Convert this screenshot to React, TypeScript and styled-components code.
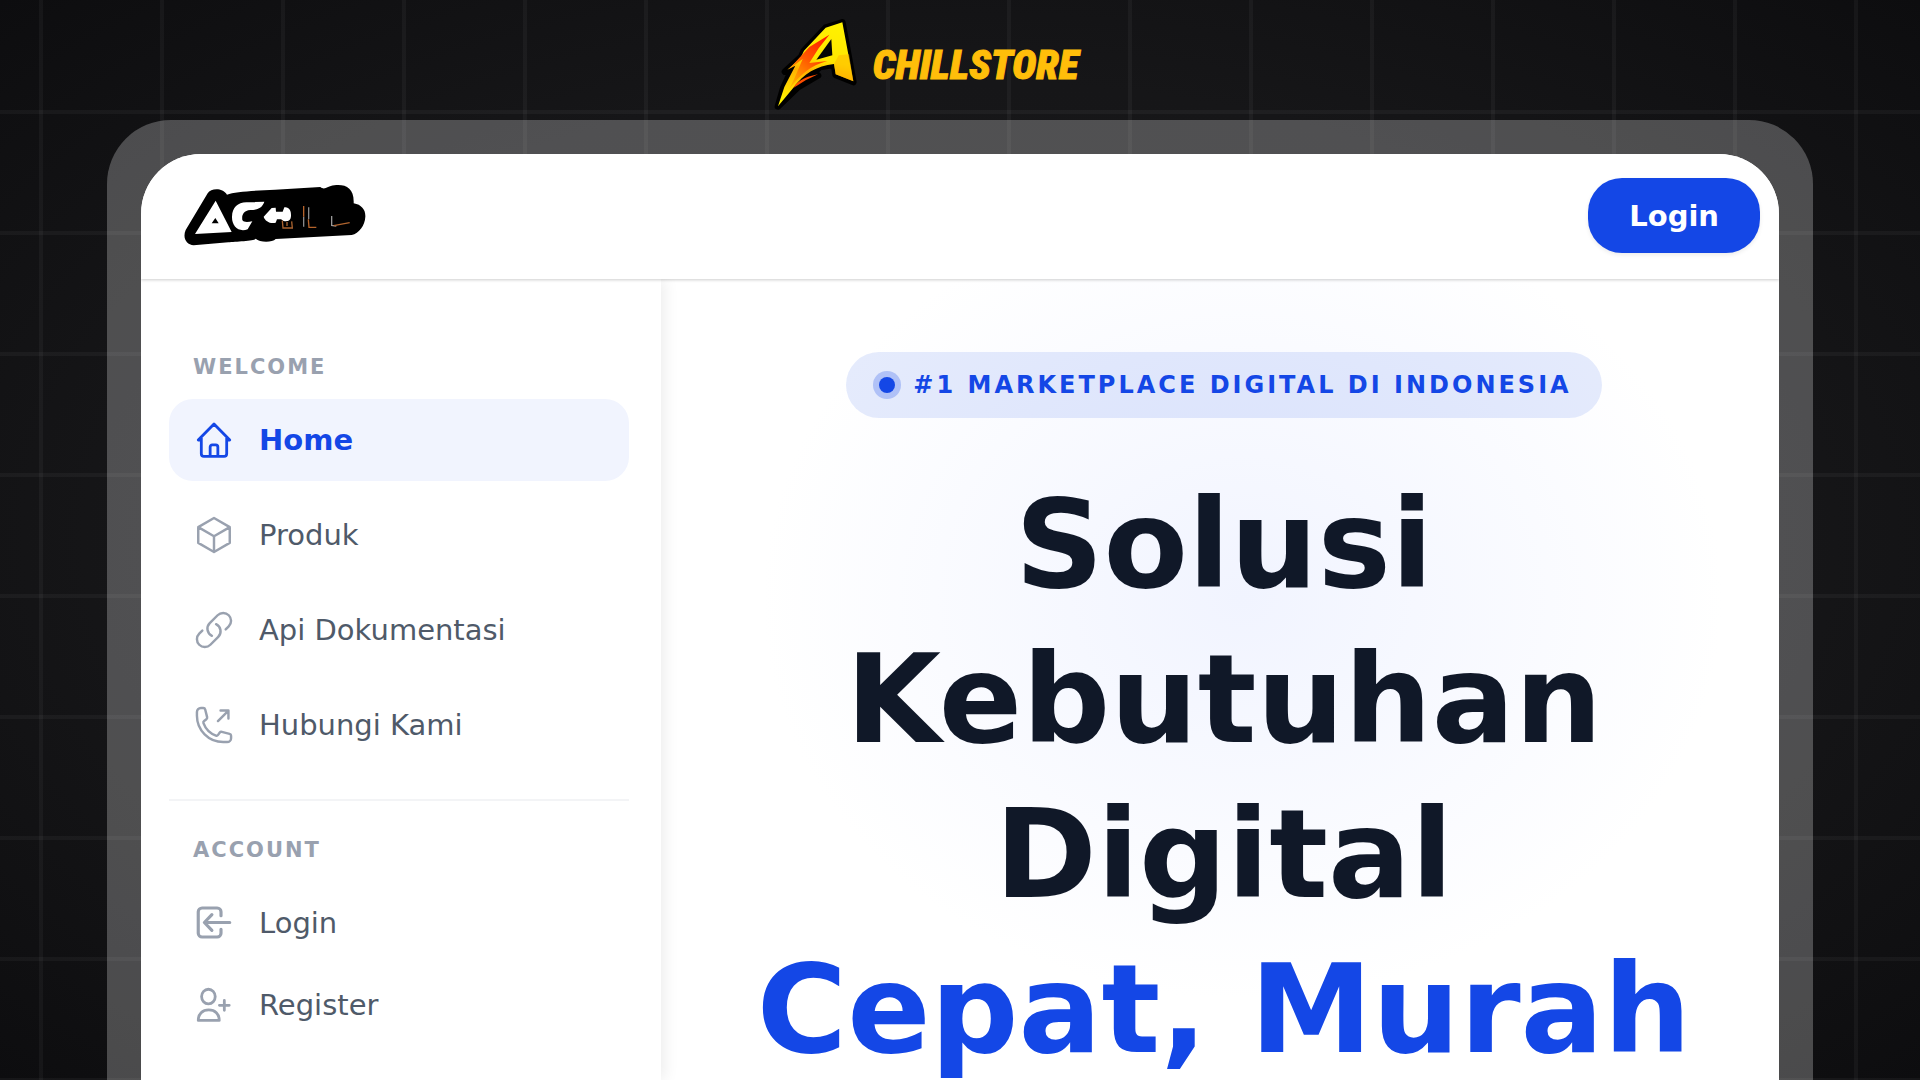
import React from 'react';
import styled, { createGlobalStyle } from 'styled-components';

const color = {
  primary: '#1447e6',
  ink: '#101828',
  text: '#4f5a69',
  muted: '#99a1af',
  line: '#f3f4f6',
  gold: '#ffbe0a',
};

const GlobalStyle = createGlobalStyle`
  *, *::before, *::after { box-sizing: border-box; }
  body {
    margin: 0;
    background: #111113;
    font-family: "DejaVu Sans", sans-serif;
  }
  h1, h2, p, ul { margin: 0; padding: 0; }
  ul { list-style: none; }
`;

const Page = styled.div`
  display: flex;
  flex-direction: column;
  height: 100vh;
  overflow: hidden;
  background:
    linear-gradient(to right, rgba(255, 255, 255, 0.04) 4px, transparent 4px) 39px 0 / 121px 121px,
    linear-gradient(to bottom, rgba(255, 255, 255, 0.04) 4px, transparent 4px) 0 110px / 121px 121px,
    radial-gradient(ellipse at center, #1a1a1c 0%, #161618 60%, #0d0d0f 100%);
`;

const TopBrand = styled.header`
  display: flex;
  justify-content: center;
  align-items: center;
  gap: 13px;
  flex: none;
  height: 120px;
  padding: 10px 72px 0 0;
`;

const BrandName = styled.span`
  color: ${color.gold};
  font: italic 900 41px/44px "Roboto Condensed", Roboto, "Liberation Sans", sans-serif;
  -webkit-text-stroke: 1px ${color.gold};
`;

const Frame = styled.div`
  display: flex;
  flex: 1;
  min-height: 0;
  margin: 0 107px;
  padding: 34px 34px 0;
  border-radius: 64px 64px 0 0;
  background: rgba(255, 255, 255, 0.25);
`;

const Site = styled.div`
  display: flex;
  flex-direction: column;
  flex: 1;
  min-width: 0;
  overflow: hidden;
  border-radius: 60px 60px 0 0;
  background: #fff;
`;

const SiteHeader = styled.header`
  display: flex;
  justify-content: space-between;
  align-items: center;
  flex: none;
  height: 125px;
  padding: 0 19px 2px 34px;
  background: #fff;
  box-shadow: 0 1px 3px rgba(0, 0, 0, 0.2);
  z-index: 2;
`;

const LoginButton = styled.button`
  height: 75px;
  padding: 0 41px;
  border: 0;
  border-radius: 34px;
  background: ${color.primary};
  color: #fff;
  font: 700 29px/40px "DejaVu Sans", sans-serif;
  box-shadow: 0 2px 4px rgba(0, 0, 0, 0.08);
`;

const Body = styled.div`
  display: flex;
  flex: 1;
  min-height: 0;
`;

const Sidebar = styled.nav`
  flex: none;
  width: 520px;
  padding: 73px 32px 0 28px;
  background: #fff;
  box-shadow: 4px 0 14px rgba(0, 0, 0, 0.07);
  z-index: 1;
`;

const GroupLabel = styled.h2`
  margin: 0 0 17px;
  padding-left: 24px;
  color: ${color.muted};
  font-size: 21px;
  line-height: 30px;
  letter-spacing: 2px;
`;

const Menu = styled.ul<{ $gap: number }>`
  display: grid;
  gap: ${(p) => p.$gap}px;
`;

const MenuLink = styled.a<{ $active?: boolean }>`
  display: flex;
  align-items: center;
  gap: 24px;
  height: 82px;
  padding: 0 24px;
  border-radius: 24px;
  background: ${(p) => (p.$active ? '#f1f4fe' : 'transparent')};
  color: ${(p) => (p.$active ? color.primary : color.text)};
  font-size: 29px;
  font-weight: ${(p) => (p.$active ? 700 : 400)};
  line-height: 40px;
  text-decoration: none;

  svg { color: ${(p) => (p.$active ? color.primary : color.muted)}; }
`;

const Divider = styled.hr`
  height: 2px;
  margin: 33px 0 34px;
  border: 0;
  background: ${color.line};
`;

const Hero = styled.main`
  display: flex;
  flex-direction: column;
  align-items: center;
  flex: 1;
  min-width: 0;
  padding: 73px 0 0 8px;
  background: radial-gradient(480px 400px at 52% 320px, #f1f4ff, #fff);
`;

const Badge = styled.p`
  display: flex;
  align-items: center;
  gap: 18px;
  flex: none;
  height: 66px;
  padding: 0 30px 0 33px;
  border-radius: 33px;
  background: rgba(20, 71, 230, 0.11);
  color: ${color.primary};
  font-size: 24px;
  font-weight: 700;
  line-height: 32px;
  letter-spacing: 3px;
`;

const Dot = styled.span`
  width: 16px;
  height: 16px;
  border-radius: 50%;
  background: ${color.primary};
  box-shadow: 0 0 0 6px rgba(20, 71, 230, 0.25);
`;

const Title = styled.h1`
  flex: none;
  margin-top: 49px;
  color: ${color.ink};
  font-size: 123px;
  line-height: 155px;
  text-align: center;
`;

const Accent = styled.span`
  display: block;
  color: ${color.primary};
  white-space: nowrap;
`;

const StrokeIcon = ({ d, width = 1.6 }: { d: string; width?: number }) => (
  <svg width="42" height="42" viewBox="0 0 24 24" fill="none" stroke="currentColor"
    strokeWidth={width} strokeLinecap="round" strokeLinejoin="round" aria-hidden="true">
    <path d={d} />
  </svg>
);

const icons = {
  home: 'M4.75 12H3l9-9.2 9 9.2h-1.75M4.75 10.8v9a1.5 1.5 0 0 0 1.5 1.5h11.5a1.5 1.5 0 0 0 1.5-1.5v-9M9.8 21.2V16a1.2 1.2 0 0 1 1.2-1.2h2a1.2 1.2 0 0 1 1.2 1.2v5.2',
  cube: 'm21 7.5-9-5.25L3 7.5m18 0-9 5.25m9-5.25v9l-9 5.25M3 7.5l9 5.25M3 7.5v9l9 5.25m0-9v9',
  link: 'M13.19 8.688a4.5 4.5 0 0 1 1.242 7.244l-4.5 4.5a4.5 4.5 0 0 1-6.364-6.364l1.757-1.757m13.35-.622 1.757-1.757a4.5 4.5 0 0 0-6.364-6.364l-4.5 4.5a4.5 4.5 0 0 0 1.242 7.244',
  phone: 'M20.25 3.75v4.5m0-4.5h-4.5m4.5 0-6 6m3 12c-8.284 0-15-6.716-15-15V4.5A2.25 2.25 0 0 1 4.5 2.25h1.372c.516 0 .966.351 1.091.852l1.106 4.423c.11.44-.054.902-.417 1.173l-1.293.97a1.062 1.062 0 0 0-.38 1.21 12.035 12.035 0 0 0 7.143 7.143c.441.162.928-.004 1.21-.38l.97-1.293a1.125 1.125 0 0 1 1.173-.417l4.423 1.106c.5.125.852.575.852 1.091V19.5a2.25 2.25 0 0 1-2.25 2.25h-2.25Z',
  login: 'M16 7.8V5.6a2.2 2.2 0 0 0-2.2-2.2H5.2A2.2 2.2 0 0 0 3 5.6v12.2A2.2 2.2 0 0 0 5.2 20h8.6a2.2 2.2 0 0 0 2.2-2.2v-2.2M21 11.7H6.7M10.8 7.2l-4.3 4.5 4.3 4.5',
  register: 'M12.7 7.2a3.9 4.2 0 1 1-7.8 0 3.9 4.2 0 0 1 7.8 0ZM3 20.8c0-3.6 2.4-6 6-6s6 2.4 6 6ZM17.9 9.4v5.6M15.1 12.2h5.6',
};

const LightningA = () => (
  <svg width="90" height="96" viewBox="0 0 270 288" role="img" aria-label="A">
    <defs>
      <linearGradient id="boltFill" x1="0.7" y1="0" x2="0.5" y2="1">
        <stop offset="0" stopColor="#fff200" />
        <stop offset="0.45" stopColor="#ffe500" />
        <stop offset="0.62" stopColor="#ffb000" />
        <stop offset="1" stopColor="#fff000" />
      </linearGradient>
      <linearGradient id="boltFlame" x1="0.8" y1="0" x2="0.2" y2="1">
        <stop offset="0" stopColor="#ff1e00" />
        <stop offset="0.5" stopColor="#ff5a00" />
        <stop offset="1" stopColor="#ffb400" />
      </linearGradient>
    </defs>
    <g transform="translate(0 -22)">
      <path d="M217 38 167 54 102 123 94 141 45 186 70 171 40 235 24 290 84 232 144 197 104 212 150 172 192 165 197 196 250 217Z"
        fill="#000" stroke="#000" strokeWidth="20" strokeLinejoin="round" />
      <path d="M217 38 167 54 102 123 92 144 52 180 76 168 43 232 24 290 72 232C100 194 140 168 192 163L197 194 250 215Z" fill="url(#boltFill)" />
      <path d="M184 88 187 137 139 150Z" fill="#050505" />
      <path d="M206 137 237 134 250 215 197 194 192 163Z" fill="#ffb800" opacity=".55" />
      <path d="M178 75 118 112 58 177 98 148 74 204 58 238C92 194 120 168 172 154L118 160 146 116Z" fill="url(#boltFlame)" />
      <path d="M78 223C98 206 118 199 144 194L108 211 70 235Z" fill="#ff4d00" />
    </g>
  </svg>
);

const AchillLogo = () => (
  <svg width="200" height="80" viewBox="0 0 600 240" role="img" aria-label="Achill">
    <path d="M98 52C108 36 142 34 156 56 180 46 240 44 300 41L436 33C450 44 456 30 478 28 512 24 538 36 536 82 560 86 572 102 571 122 570 148 552 172 530 177L302 189C292 200 254 200 242 188 236 196 180 196 160 199L56 208C34 206 22 186 32 162Z"
      fill="#000" />
    <path d="M122 74 60 174 170 168ZM121 126 131 142H110Z" fill="#fff" fillRule="evenodd" />
    <path d="M268 77C262 96 246 102 226 102 204 104 200 118 202 132 206 140 220 138 232 136L218 160C190 170 170 150 171 122 172 94 188 80 214 79Z" fill="#fff" />
    <path d="M266 122 290 96 302 95 303 107H323L328 94C342 92 349 104 348 120 347 134 340 137 326 135L318 130H306L302 140C286 144 270 136 266 122Z" fill="#fff" />
    <g fill="none" strokeWidth="4">
      <path d="M322 134 324 156H352L350 136M336 138V150" stroke="#a9622f" />
      <path d="M386 122V152M401 94V130" stroke="#8a8a8a" />
      <path d="M386 90V122M400 130 402 154H424" stroke="#b5632b" />
      <path d="M470 120V148L484 150" stroke="#999" />
      <path d="M476 149 524 140" stroke="#b0642e" />
    </g>
  </svg>
);

type Item = { label: string; icon: keyof typeof icons; active?: boolean; width?: number };

const welcome: Item[] = [
  { label: 'Home', icon: 'home', active: true },
  { label: 'Produk', icon: 'cube', width: 1.4 },
  { label: 'Api Dokumentasi', icon: 'link', width: 1.4 },
  { label: 'Hubungi Kami', icon: 'phone', width: 1.4 },
];

const account: Item[] = [
  { label: 'Login', icon: 'login', width: 1.8 },
  { label: 'Register', icon: 'register', width: 1.6 },
];

const MenuList = ({ items, gap }: { items: Item[]; gap: number }) => (
  <Menu $gap={gap}>
    {items.map((item) => (
      <li key={item.label}>
        <MenuLink href="#" $active={item.active}>
          <StrokeIcon d={icons[item.icon]} width={item.width} />
          {item.label}
        </MenuLink>
      </li>
    ))}
  </Menu>
);

export default function App() {
  return (
    <Page>
      <GlobalStyle />
      <TopBrand>
        <LightningA />
        <BrandName>CHILLSTORE</BrandName>
      </TopBrand>
      <Frame>
        <Site>
          <SiteHeader>
            <AchillLogo />
            <LoginButton type="button">Login</LoginButton>
          </SiteHeader>
          <Body>
            <Sidebar>
              <GroupLabel>WELCOME</GroupLabel>
              <MenuList items={welcome} gap={13} />
              <Divider />
              <GroupLabel>ACCOUNT</GroupLabel>
              <MenuList items={account} gap={0} />
            </Sidebar>
            <Hero>
              <Badge>
                <Dot />
                #1 MARKETPLACE DIGITAL DI INDONESIA
              </Badge>
              <Title>
                Solusi Kebutuhan Digital <Accent>Cepat, Murah</Accent>
              </Title>
            </Hero>
          </Body>
        </Site>
      </Frame>
    </Page>
  );
}
